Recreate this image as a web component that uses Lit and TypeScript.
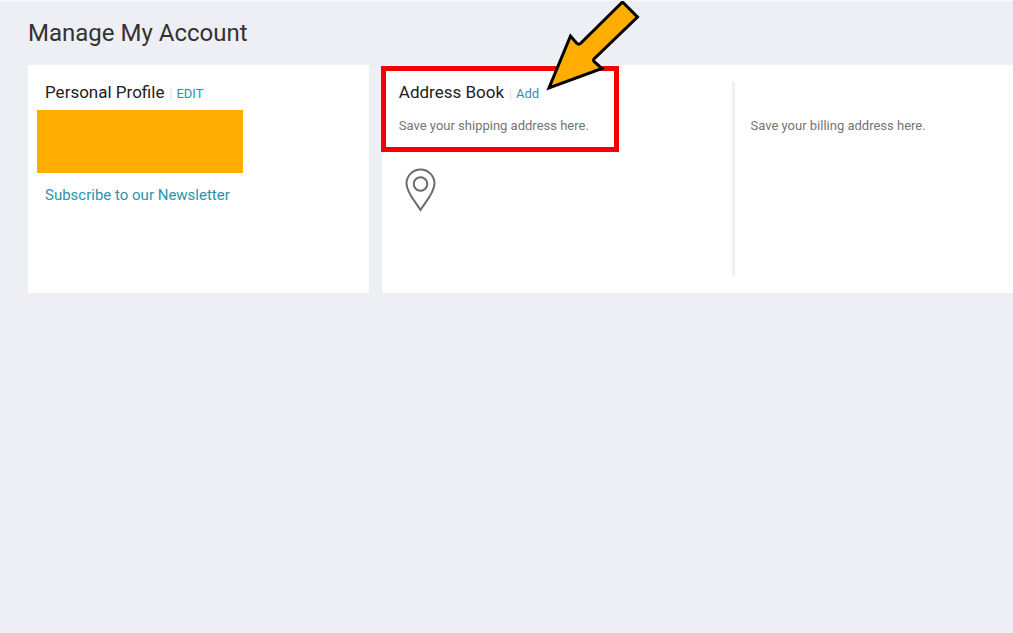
import { LitElement, html, css } from "lit";
import { customElement } from "lit/decorators.js";

@customElement("account-panels")
export class AccountPanels extends LitElement {
  static styles = css`
    :host {
      display: block;
    }
    .panels {
      display: grid;
      grid-template-columns: minmax(0, 27fr) minmax(0, 50fr);
      gap: 13px;
      min-height: 228px;
    }
    .panel {
      box-sizing: border-box;
      background: #fff;
      padding: 17px 0 17px 17px;
    }
    .book {
      display: grid;
      grid-template-columns: minmax(0, 13fr) minmax(0, 11fr);
    }
    .title {
      display: flex;
      align-items: baseline;
      height: 20px;
      line-height: 20px;
    }
    h2 {
      margin: 0;
      font-size: 17px;
      font-weight: 400;
      color: #212121;
    }
    a {
      color: #2a94ac;
      text-decoration: none;
    }
    .action {
      font-size: 13px;
    }
    .action::before {
      content: "|";
      color: #dadada;
      margin: 0 4px 0 5px;
      font-size: 12px;
    }
    .redacted {
      width: 206px;
      height: 63px;
      margin: 8px 0 12px -8px;
      background: #ffad00;
    }
    .newsletter {
      display: block;
      font-size: 15px;
      line-height: 20px;
    }
    .shipping {
      position: relative;
    }
    .note {
      margin: 14px 0 0;
      font-size: 13px;
      line-height: 20px;
      color: #757575;
    }
    .pin {
      display: block;
      margin: 32px 0 0 5px;
    }
    .billing {
      border-left: 3px solid #eff0f5;
      padding: 34px 0 0 16px;
    }
    .billing .note {
      margin: 0;
    }
    .highlight {
      position: absolute;
      box-sizing: border-box;
      left: -18px;
      top: -16px;
      width: 238px;
      height: 86px;
      border: 5px solid #f80000;
      pointer-events: none;
    }
    .arrow {
      position: absolute;
      left: 141px;
      top: -82px;
      pointer-events: none;
    }
  `;

  render() {
    return html`
      <div class="panels">
        <section class="panel">
          <div class="title">
            <h2>Personal Profile</h2>
            <a class="action" href="#edit">EDIT</a>
          </div>
          <div class="redacted"></div>
          <a class="newsletter" href="#newsletter">Subscribe to our Newsletter</a>
        </section>
        <section class="panel book">
          <div class="shipping">
            <div class="title">
              <h2>Address Book</h2>
              <a class="action" href="#add">Add</a>
            </div>
            <p class="note">Save your shipping address here.</p>
            <svg class="pin" width="32" height="44" viewBox="0 0 32 44" fill="none"
              stroke="#6b6b6b" stroke-width="2" aria-hidden="true">
              <path d="M16.500 42 C12.500 35 2.500 25 2.500 15.500 A14 14 0 0 1 30.500 15.500 C30.500 25 20.500 35 16.500 42 Z" />
              <circle cx="16.500" cy="16" r="6.800" />
            </svg>
            <div class="highlight"></div>
            <svg class="arrow" width="110" height="92" viewBox="0 0 110 92" aria-hidden="true">
              <path d="M82.500 2 L97.500 17 L54 59 Q53 60.500 54.500 62 L62 68.500 L9 88 L30.500 36 L36.500 43 Q39 45.500 41.500 42.500 Z"
                fill="#ffad00" stroke="#000" stroke-width="3" />
            </svg>
          </div>
          <div class="billing">
            <p class="note">Save your billing address here.</p>
          </div>
        </section>
      </div>
    `;
  }
}

@customElement("app-root")
export class AppRoot extends LitElement {
  static styles = css`
    :host {
      display: block;
      box-sizing: border-box;
      min-height: 100vh;
      padding: 16px 0 16px 28px;
      border-top: 1px solid #f8f8fa;
      background: #eeeff4;
      font-family: Roboto, "Liberation Sans", sans-serif;
      overflow: hidden;
    }
    h1 {
      margin: 0 0 16px;
      font-size: 24px;
      line-height: 32px;
      font-weight: 400;
      color: #333;
    }
  `;

  render() {
    return html`
      <h1>Manage My Account</h1>
      <account-panels></account-panels>
    `;
  }
}
